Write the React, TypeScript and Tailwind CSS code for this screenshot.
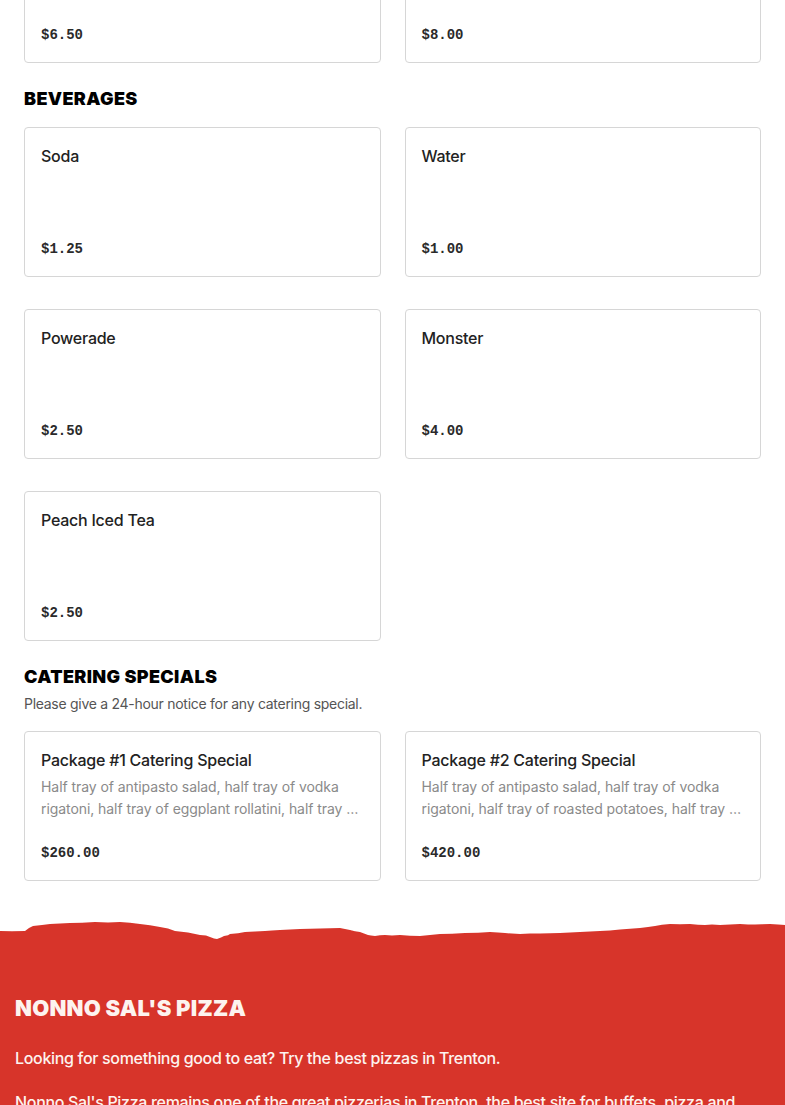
import React from "react";

type Item = { name: string; price: string; description?: string };

const topRow: Item[] = [
  { name: "", price: "$6.50" },
  { name: "", price: "$8.00" },
];

const beverages: Item[] = [
  { name: "Soda", price: "$1.25" },
  { name: "Water", price: "$1.00" },
  { name: "Powerade", price: "$2.50" },
  { name: "Monster", price: "$4.00" },
  { name: "Peach Iced Tea", price: "$2.50" },
];

const catering: Item[] = [
  {
    name: "Package #1 Catering Special",
    description:
      "Half tray of antipasto salad, half tray of vodka rigatoni, half tray of eggplant rollatini, half tray of chicken parmigiana and garlic knots.",
    price: "$260.00",
  },
  {
    name: "Package #2 Catering Special",
    description:
      "Half tray of antipasto salad, half tray of vodka rigatoni, half tray of roasted potatoes, half tray of chicken francese and garlic knots.",
    price: "$420.00",
  },
];

const MenuCard = ({ item }: { item: Item }) => (
  <div className="flex h-[150px] flex-col rounded-[4px] border border-[#d6d6d6] bg-white p-4">
    <div className="text-[16px] font-medium leading-6 tracking-[-0.015em] text-[#222]">{item.name}</div>
    {item.description && (
      <p className="mt-1 line-clamp-2 text-[14px] leading-[22px] tracking-[-0.005em] text-[#8a8a8a]">
        {item.description}
      </p>
    )}
    <div className="mt-auto font-['Liberation_Mono',monospace] text-[14px] font-bold leading-[22px] text-[#2a2a2a]">
      {item.price}
    </div>
  </div>
);

const SectionTitle = ({ children }: { children: React.ReactNode }) => (
  <h2 className="text-[18px] font-black uppercase leading-6 tracking-[0.02em] text-black">{children}</h2>
);

const TornEdge = () => (
  <svg className="block h-[20px] w-full" viewBox="0 0 785 20" preserveAspectRatio="none">
    <path
      fill="#d7342a"
      d="M0 11 L12 11.3 L25 11 L29 8 L33 6 L42 5 L50 4 L60 3.6 L70 3 L82 2.8 L95 2 L108 2.4 L120 2 L130 2.8 L140 4 L150 5.2 L160 7 L168 8.6 L175 11 L188 12.6 L200 15 L206 15.6 L210 17 L214 18.4 L217 19 L221 17.4 L224 16 L228 15.2 L230 14 L238 13.2 L245 12 L255 11.6 L265 11 L272 10.6 L280 10 L290 9.6 L300 9 L310 8.8 L320 8.5 L330 8.2 L340 8 L345 9 L350 10 L355 11.2 L360 12 L364 13.6 L368 15 L371 15.4 L375 16 L380 15.3 L385 15 L392 15.4 L400 15 L410 15.8 L420 16 L425 15.4 L430 15 L435 14.6 L440 14 L452 13.7 L465 13 L478 12.8 L490 12 L498 12.6 L505 13 L512 13.6 L520 14 L530 13.6 L540 13.5 L550 13.2 L560 13 L570 12.6 L580 12 L590 11.6 L600 11 L610 10.4 L620 9.5 L630 8.8 L640 8 L648 7 L655 6 L662 4.8 L670 4 L680 4.3 L690 4 L698 4.8 L705 5 L712 4.6 L720 5 L730 4.4 L740 4 L748 4.6 L755 4.5 L762 4.2 L770 4 L778 4.6 L785 5 L785 20 L0 20 Z"
    />
  </svg>
);

export default function App() {
  return (
    <div className="min-h-screen overflow-hidden bg-white font-['Inter','Noto_Sans',sans-serif]">
      <main className="px-6">
        <div className="-mt-[87px] grid grid-cols-2 gap-6">
          {topRow.map((item, i) => (
            <MenuCard key={i} item={item} />
          ))}
        </div>

        <section className="mt-6">
          <SectionTitle>Beverages</SectionTitle>
          <div className="mt-4 grid grid-cols-2 gap-x-6 gap-y-8">
            {beverages.map((item) => (
              <MenuCard key={item.name} item={item} />
            ))}
          </div>
        </section>

        <section className="mt-6">
          <SectionTitle>Catering Specials</SectionTitle>
          <p className="mt-1 text-[14px] leading-[22px] tracking-[-0.02em] text-[#555]">
            Please give a 24-hour notice for any catering special.
          </p>
          <div className="mt-4 grid grid-cols-2 gap-x-6 gap-y-8">
            {catering.map((item) => (
              <MenuCard key={item.name} item={item} />
            ))}
          </div>
        </section>
      </main>

      <footer className="mt-[39px]">
        <TornEdge />
        <div className="bg-[#d7342a] px-[15px] pb-16 pt-[54px] text-[#fdf3ef]">
          <h3 className="text-[22px] font-black uppercase leading-7 tracking-[0.01em]">Nonno Sal's Pizza</h3>
          <p className="mt-6 text-[16px] font-medium leading-6 tracking-[-0.02em]">
            Looking for something good to eat? Try the best pizzas in Trenton.
          </p>
          <p className="mt-5 text-[16px] font-medium leading-6 tracking-[-0.02em]">
            Nonno Sal's Pizza remains one of the great pizzerias in Trenton, the best site for buffets, pizza and salads in
            town. Stop by or order online for pickup and delivery.
          </p>
        </div>
      </footer>
    </div>
  );
}
